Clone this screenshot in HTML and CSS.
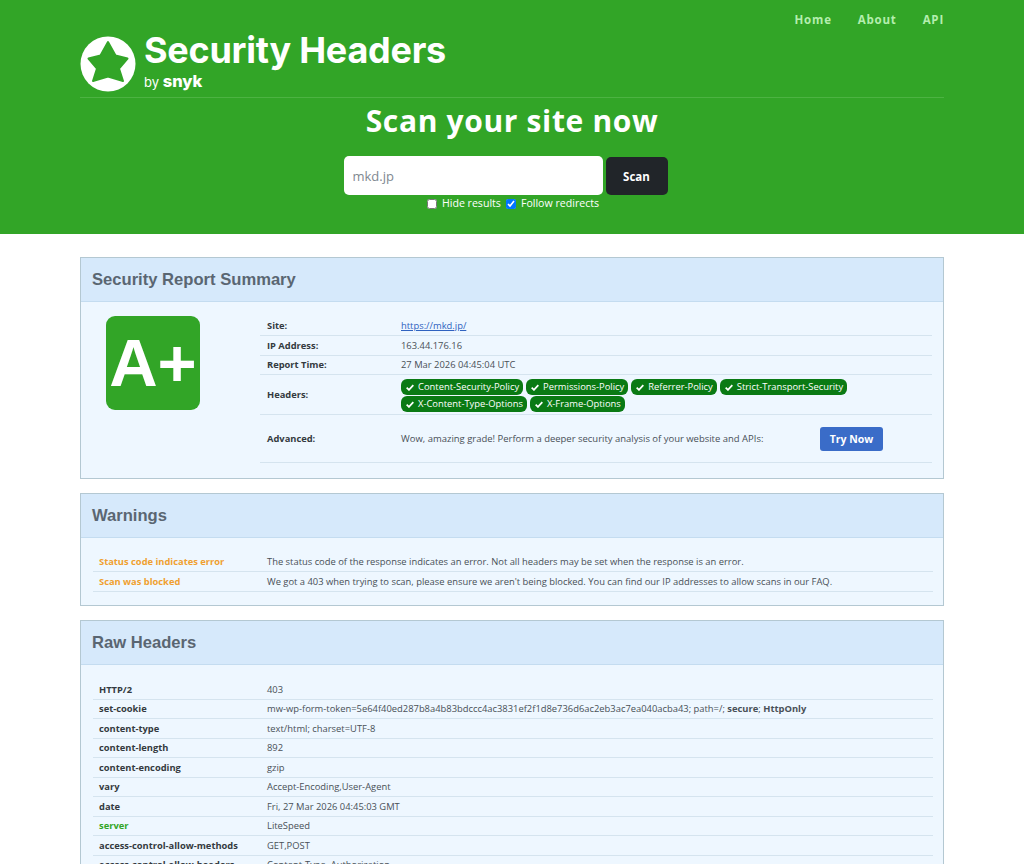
FILE: index.html
```html
<!DOCTYPE html>
<html lang="en">
<head>
  <meta charset="UTF-8" />
  <title>Security Headers</title>
  <link rel="stylesheet" href="styles.css">
</head>
<body>

  <!-- shared check icon for the header pills -->
  <svg class="defs" width="0" height="0">
    <symbol id="check" viewBox="0 0 10 8">
      <path d="M1.2 4.2 3.8 6.7 8.8 1.4" fill="none" stroke="#fff" stroke-width="2"/>
    </symbol>
  </svg>

  <header class="top">
    <div class="wrap">
      <nav class="nav">
        <a href="#">Home</a>
        <a href="#">About</a>
        <a href="#">API</a>
      </nav>
      <div class="brand">
        <svg class="brand-icon" viewBox="0 0 56 56" width="56" height="56">
          <circle cx="28" cy="28" r="27.5" fill="#fff"/>
          <path d="M28 6 35.5 19.5 47.5 22.5 39 32.5 43 45 28 40.5 13 45 17 32.5 8.5 22.5 20.5 19.5Z" fill="#32a527" stroke="#32a527" stroke-width="2" stroke-linejoin="round"/>
        </svg>
        <div class="brand-text">
          <div class="brand-name">Security Headers</div>
          <div class="brand-by">by <b>snyk</b></div>
        </div>
      </div>
      <h1 class="scan-title">Scan your site now</h1>
      <div class="scan-form">
        <input class="scan-input" type="text" value="mkd.jp" />
        <button class="scan-btn">Scan</button>
      </div>
      <div class="scan-opts">
        <label><input type="checkbox" /> Hide results</label>
        <label><input type="checkbox" checked /> Follow redirects</label>
      </div>
    </div>
  </header>

  <main class="wrap content">

    <section class="card">
      <div class="card-head">Security Report Summary</div>
      <div class="card-body summary">
        <div class="grade-col">
          <div class="grade">A+</div>
        </div>
        <table class="info">
          <tr><th>Site:</th><td><a href="#">https://mkd.jp/</a></td></tr>
          <tr><th>IP Address:</th><td>163.44.176.16</td></tr>
          <tr><th>Report Time:</th><td>27 Mar 2026 04:45:04 UTC</td></tr>
          <tr class="row-pills">
            <th>Headers:</th>
            <td>
              <div class="pills">
                <span class="pill"><svg class="tick"><use href="#check"/></svg>Content-Security-Policy</span>
                <span class="pill"><svg class="tick"><use href="#check"/></svg>Permissions-Policy</span>
                <span class="pill"><svg class="tick"><use href="#check"/></svg>Referrer-Policy</span>
                <span class="pill"><svg class="tick"><use href="#check"/></svg>Strict-Transport-Security</span>
                <span class="pill"><svg class="tick"><use href="#check"/></svg>X-Content-Type-Options</span>
                <span class="pill"><svg class="tick"><use href="#check"/></svg>X-Frame-Options</span>
              </div>
            </td>
          </tr>
          <tr class="row-adv">
            <th>Advanced:</th>
            <td>
              <div class="adv">
                <span>Wow, amazing grade! Perform a deeper security analysis of your website and APIs:</span>
                <a class="try" href="#">Try Now</a>
              </div>
            </td>
          </tr>
        </table>
      </div>
    </section>

    <section class="card">
      <div class="card-head">Warnings</div>
      <div class="card-body warnings">
        <table class="list">
          <tr><th class="warn">Status code indicates error</th><td>The status code of the response indicates an error. Not all headers may be set when the response is an error.</td></tr>
          <tr><th class="warn">Scan was blocked</th><td>We got a 403 when trying to scan, please ensure we aren't being blocked. You can find our IP addresses to allow scans in our FAQ.</td></tr>
        </table>
      </div>
    </section>

    <section class="card">
      <div class="card-head">Raw Headers</div>
      <div class="card-body raw">
        <table class="list">
          <tr><th>HTTP/2</th><td>403</td></tr>
          <tr><th>set-cookie</th><td>mw-wp-form-token=5e64f40ed287b8a4b83bdccc4ac3831ef2f1d8e736d6ac2eb3ac7ea040acba43; path=/; <b>secure</b>; <b>HttpOnly</b></td></tr>
          <tr><th>content-type</th><td>text/html; charset=UTF-8</td></tr>
          <tr><th>content-length</th><td>892</td></tr>
          <tr><th>content-encoding</th><td>gzip</td></tr>
          <tr><th>vary</th><td>Accept-Encoding,User-Agent</td></tr>
          <tr><th>date</th><td>Fri, 27 Mar 2026 04:45:03 GMT</td></tr>
          <tr><th class="good">server</th><td>LiteSpeed</td></tr>
          <tr><th>access-control-allow-methods</th><td>GET,POST</td></tr>
          <tr><th>access-control-allow-headers</th><td>Content-Type, Authorization</td></tr>
        </table>
      </div>
    </section>

  </main>

</body>
</html>
```

FILE: styles.css
```css
html, body {
  height: 864px;
  overflow: hidden;
}
body {
  margin: 0;
  font-family: "Open Sans", sans-serif;
  font-size: 9.4px;
  color: #495057;
  background: #fff;
}
.defs {
  display: block;
}
.wrap {
  width: 864px;
  margin: 0 auto;
}
.top {
  height: 234px;
  background: #32a527;
  color: #fff;
}
.nav {
  display: flex;
  justify-content: flex-end;
  gap: 26px;
  height: 32px;
  padding-top: 12px;
  box-sizing: border-box;
}
.nav a {
  color: #b4eeae;
  font-size: 11.5px;
  font-weight: 700;
  letter-spacing: 0.8px;
  text-decoration: none;
}
.brand {
  display: flex;
  align-items: flex-start;
  gap: 8px;
  height: 65px;
  border-bottom: 1px solid #4cb342;
}
.brand-icon {
  margin-top: 4px;
}
.brand-name {
  font-family: Inter, sans-serif;
  font-size: 36px;
  line-height: 36px;
  font-weight: 700;
  letter-spacing: -0.25px;
}
.brand-by {
  font-family: Inter, sans-serif;
  font-size: 13px;
  line-height: 18px;
  margin-top: 4px;
}
.brand-by b {
  font-size: 16.5px;
  font-weight: 800;
}
.scan-title {
  margin: 0;
  padding-top: 3px;
  text-align: center;
  font-size: 30px;
  line-height: 40px;
  font-weight: 700;
  letter-spacing: 0.65px;
}
.scan-form {
  display: flex;
  justify-content: center;
  gap: 3px;
  margin-top: 15px;
  padding-right: 13px;
}
.scan-input {
  width: 259px;
  height: 39px;
  box-sizing: border-box;
  border: none;
  border-radius: 5px;
  padding: 0 9px;
  font-family: "Open Sans", sans-serif;
  font-size: 13px;
  color: #808890;
  background: #fff;
}
.scan-btn {
  width: 62px;
  height: 38px;
  margin-top: 1px;
  border: none;
  border-radius: 5px;
  background: #212529;
  color: #fff;
  font-family: "Open Sans", sans-serif;
  font-size: 11.5px;
  font-weight: 700;
}
.scan-opts {
  display: flex;
  justify-content: center;
  gap: 5px;
  margin-top: 1px;
  padding-left: 2px;
  font-size: 10.6px;
  line-height: 15px;
  color: #fff;
}
.scan-opts label {
  display: flex;
  align-items: center;
  gap: 5px;
}
.scan-opts input {
  margin: 0;
  width: 10px;
  height: 10px;
}
.content {
  padding-top: 23px;
}
.card {
  border: 1px solid #b4c8d2;
  background: #eef7ff;
  margin-bottom: 14px;
}
.card-head {
  height: 43px;
  line-height: 44px;
  padding-left: 11px;
  font-family: "Liberation Sans", sans-serif;
  font-size: 16.6px;
  font-weight: 700;
  color: #5a6672;
  background: #d6e9fb;
  border-bottom: 1px solid #c4dcf0;
}
.card-body {
  padding: 14px 10px 14px 12px;
}
.warnings {
  padding-bottom: 13px;
}
.raw {
  padding-top: 15px;
}
.summary {
  display: flex;
  padding-right: 11px;
  padding-bottom: 15px;
}
.grade-col {
  width: 167px;
  flex: none;
  padding-left: 13px;
  box-sizing: border-box;
}
.grade {
  width: 94px;
  height: 94px;
  border-radius: 9px;
  background: #32a527;
  color: #fff;
  font-family: "Liberation Sans", sans-serif;
  font-size: 67px;
  font-weight: 700;
  line-height: 93px;
  text-align: center;
}
table {
  border-collapse: collapse;
  width: 100%;
}
th, td {
  box-sizing: border-box;
  border-bottom: 1px solid #d5e4ef;
  text-align: left;
  padding: 1px 0 0;
  height: 19.5px;
  line-height: 14px;
  vertical-align: middle;
}
th {
  font-size: 9.33px;
  font-weight: 700;
  color: #343a40;
}
.info th {
  width: 141px;
  padding-left: 7px;
}
.list th {
  width: 174px;
  padding-left: 6px;
}
.row-pills td,
.row-adv td {
  padding-top: 0;
}
.warn {
  color: #f0a030;
}
.good {
  color: #32a527;
}
.pills {
  display: flex;
  flex-wrap: wrap;
  gap: 1px 3px;
  padding: 4px 0 2px;
}
.pill {
  display: inline-flex;
  align-items: center;
  gap: 3px;
  background: #0a7a14;
  color: #fff;
  border-radius: 6px;
  padding: 0 4px;
  line-height: 16px;
  height: 16px;
  white-space: nowrap;
}
.tick {
  width: 10px;
  height: 7px;
}
.adv {
  display: flex;
  align-items: center;
  height: 47px;
}
.adv span {
  width: 419px;
  font-size: 9.48px;
}
.try {
  background: #3a6cc8;
  color: #fff;
  font-weight: 700;
  font-size: 10.5px;
  line-height: 24px;
  height: 24px;
  width: 63px;
  text-align: center;
  border-radius: 3px;
  text-decoration: none;
}
td a {
  color: #2f62c0;
}
```
